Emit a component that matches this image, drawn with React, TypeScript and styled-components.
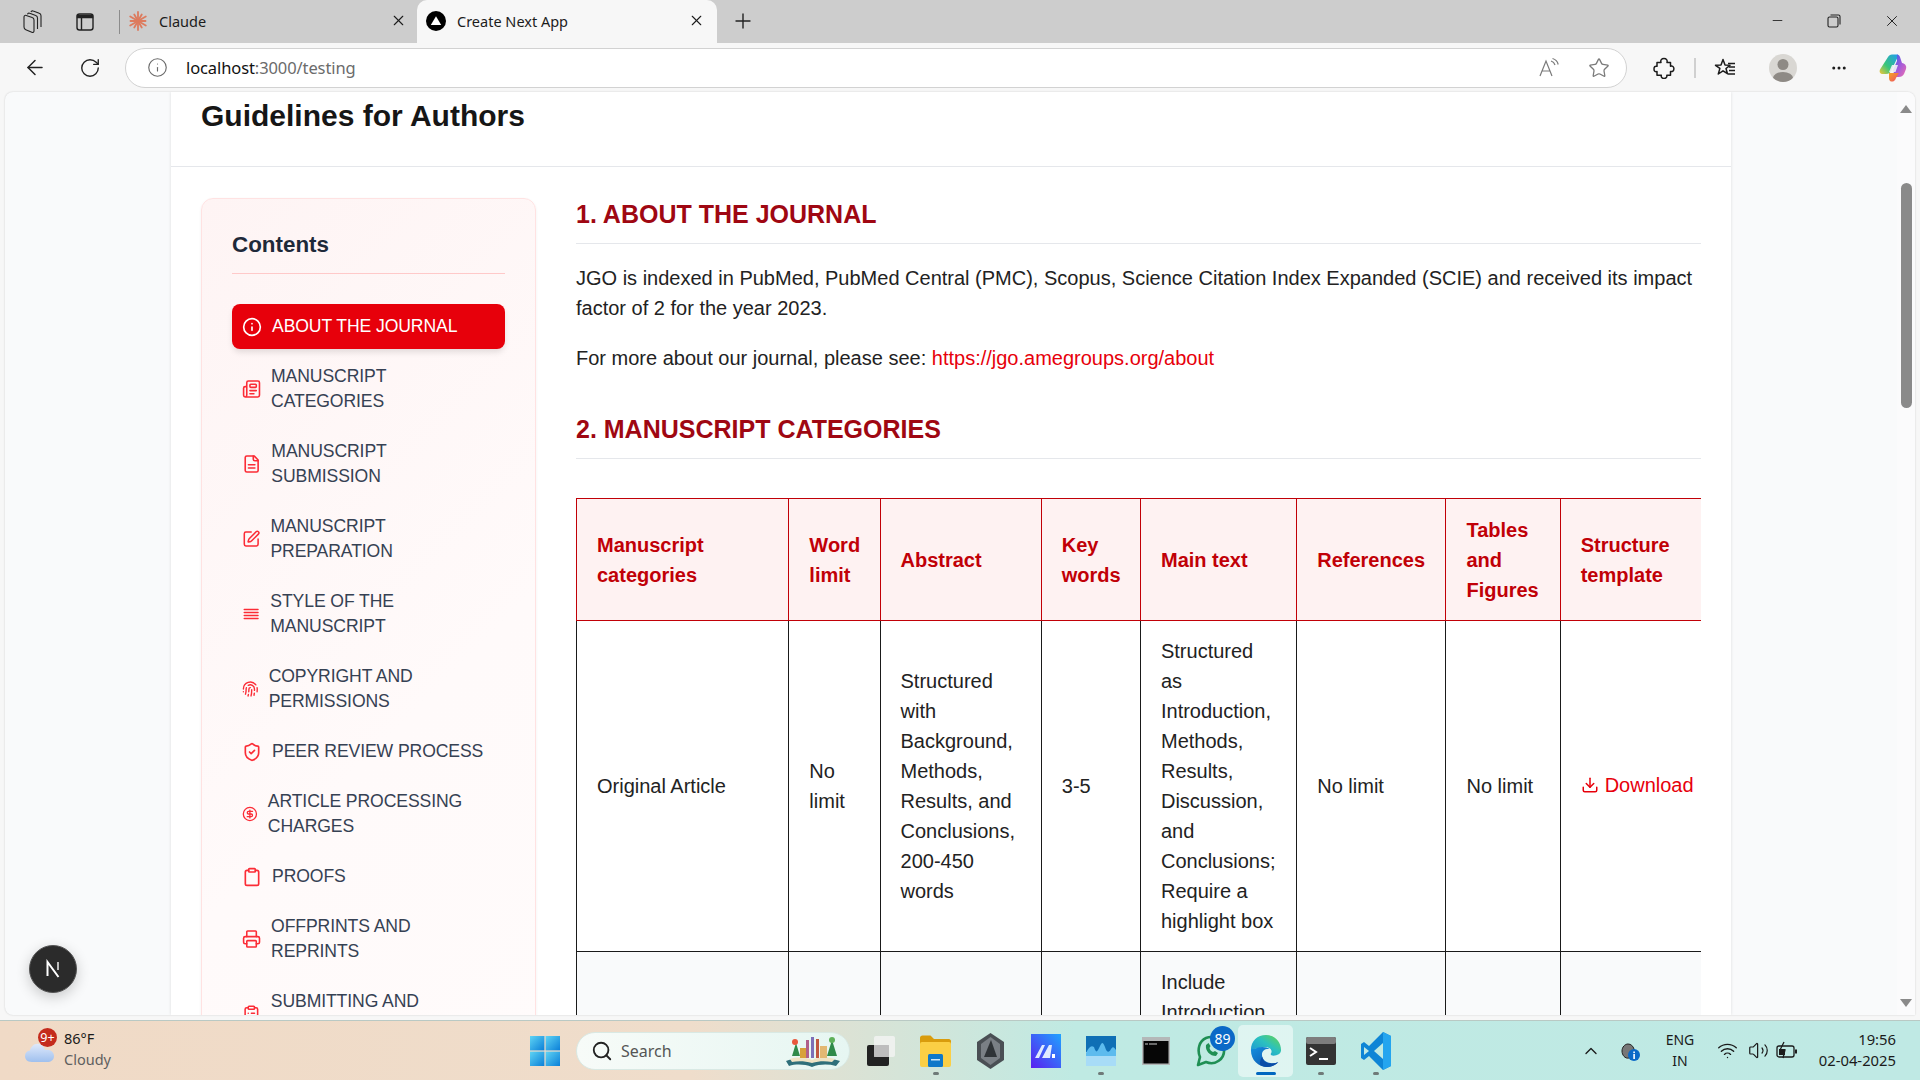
import React from "react";
import styled, { createGlobalStyle } from "styled-components";
import {
  ArrowLeft, RotateCw, Info, Star, Newspaper, SquarePen, Fingerprint, ShieldCheck,
  CircleDollarSign, Clipboard, Printer, ClipboardList, Download, Plus, X, Minus, Search,
  ChevronUp, Wifi, Volume2, MoreHorizontal,
} from "lucide-react";
import { FiAlignJustify } from "react-icons/fi";

const sans = `"Liberation Sans", Arial, sans-serif`;
const ui = `"Noto Sans", "Open Sans", sans-serif`;

const Global = createGlobalStyle`
  html, body { margin: 0; padding: 0; width: 1920px; height: 1080px; overflow: hidden; background: #f7f7f7; }
  * { box-sizing: border-box; }
`;

const Win = styled.div`
  width: 1920px; height: 1080px; display: flex; flex-direction: column; background: #f7f7f7; font-family: ${sans}; overflow: hidden;
`;

/* ---------- tab strip ---------- */
const TabStrip = styled.div`
  height: 43px; flex: none; background: #cdcdcd; display: flex; align-items: stretch; padding-left: 21px;
`;
const StripIcon = styled.div`
  width: 24px; height: 43px; display: flex; align-items: center; justify-content: center; margin-right: 28px; color: #222;
  &:nth-child(2) { margin-right: 22px; }
`;
const StripSep = styled.div`
  width: 1px; height: 24px; background: #8c8c8c; align-self: center; margin-right: 8px;
`;
const Tab = styled.div<{ $active?: boolean }>`
  width: ${(p) => (p.$active ? "300px" : "289px")}; height: 43px; flex: none; display: flex; align-items: center;
  padding: ${(p) => (p.$active ? "0 12px 2px 9px" : "0 10px 2px 0")};
  background: ${(p) => (p.$active ? "#f7f7f7" : "transparent")};
  border-radius: ${(p) => (p.$active ? "10px 10px 0 0" : "0")};
  font: 14.5px ${ui}; color: #1c1c1c; gap: 11px;
`;
const TabTitle = styled.span`
  flex: 1; white-space: nowrap;
`;
const NewTab = styled.div`
  width: 52px; display: flex; align-items: center; justify-content: center; color: #222; padding-bottom: 2px;
`;
const WinControls = styled.div`
  margin-left: auto; display: flex; align-items: center; padding: 0 19px 2px 0; gap: 42px; color: #222;
`;

/* ---------- toolbar ---------- */
const Toolbar = styled.div`
  height: 49px; flex: none; display: flex; align-items: center; padding: 0 0 0 23px; color: #222;
`;
const NavBtn = styled.div`
  width: 24px; height: 24px; flex: none; display: flex; align-items: center; justify-content: center; margin-right: 31px;
  &:nth-child(2) { margin-right: 23px; }
`;
const Address = styled.div`
  width: 1502px; height: 40px; flex: none; background: #fff; border: 1.5px solid #d2d2d2; border-radius: 20px; display: flex;
  align-items: center; padding: 0 16px 0 21px; color: #6a6a6a;
`;
const UrlHost = styled.span`color: #111;`;
const Url = styled.span`
  font: 16.5px ${ui}; color: #6b6b6b; margin-left: 18px; flex: 1; letter-spacing: -0.1px;
`;
const AddrIcons = styled.div`
  display: flex; align-items: center; gap: 28px; color: #7a7a7a;
`;
const ToolIcons = styled.div`
  display: flex; align-items: center; flex: none; margin-left: 25px; color: #1c1c1c;
`;
const ToolCell = styled.div<{ $w: number; $ml?: number }>`
  width: ${(p) => p.$w}px; margin-left: ${(p) => p.$ml ?? 0}px; display: flex; align-items: center; justify-content: center; flex: none;
`;
const ToolSep = styled.div`
  width: 2px; height: 20px; background: #d0d0d0;
`;
const Avatar = styled.div`
  width: 28px; height: 28px; border-radius: 50%; background: #d9d7d3; overflow: hidden; display: flex;
`;

/* ---------- viewport ---------- */
const Viewport = styled.div`
  flex: none; height: 923px; margin: 0 5px 0 5px; background: #f9fafb; border-radius: 8px 8px 0 8px;
  box-shadow: 0 0 2px rgba(0,0,0,0.18); display: flex; overflow: hidden; position: relative;
`;
const PageArea = styled.div`
  flex: 1; display: flex; justify-content: center; min-width: 0;
`;
const Sheet = styled.div`
  width: 1560px; flex: none; background: #fff; box-shadow: 0 0 3px rgba(0,0,0,0.12);
`;
const PageHead = styled.header`
  padding: 6px 30px 0; border-bottom: 1px solid #e5e7eb; height: 75px;
`;
const PageTitle = styled.h1`
  margin: 0; font: bold 30px/36px ${sans}; color: #161616;
`;
const Body = styled.div`
  display: flex; gap: 40px; padding: 31px 30px 0;
`;
const Sidebar = styled.aside`
  width: 335px; flex: none; align-self: flex-start; padding: 32px 30px 30px; border: 1px solid #ffe2e2; border-radius: 12px;
  background: linear-gradient(135deg, #fef4f4 0%, #fffafa 60%, #fffbfb 100%);
  box-shadow: 0 1px 3px rgba(0,0,0,0.06);
`;
const SideTitle = styled.h3`
  margin: 0; font: bold 22.4px/28px ${sans}; color: #1e2939; padding-bottom: 14px; border-bottom: 1px solid #ffc9c9; margin-bottom: 30px;
`;
const NavList = styled.nav`
  display: flex; flex-direction: column; gap: 5px;
`;
const NavItem = styled.a<{ $active?: boolean }>`
  display: flex; align-items: center; padding: 10px 12px 10px 10px; border-radius: 8px; font: 17.6px/25px ${sans};
  letter-spacing: -0.1px;
  color: ${(p) => (p.$active ? "#fff" : "#364153")};
  background: ${(p) => (p.$active ? "#e7000b" : "transparent")};
  box-shadow: ${(p) => (p.$active ? "0 4px 6px -1px rgba(0,0,0,0.12)" : "none")};
  svg { width: 20px; height: 20px; margin-right: 10px; color: ${(p) => (p.$active ? "#fff" : "#fb2c36")}; overflow: hidden; }
`;
const Main = styled.main`
  flex: 1; min-width: 0;
`;
const SectionTitle = styled.h2`
  margin: 0 0 19px; font: bold 25px/33px ${sans}; color: #9f0712; padding-bottom: 12px; border-bottom: 1px solid #e5e7eb;
`;
const Para = styled.p`
  margin: 0 0 20px; font: 20px/30px ${sans}; color: #222;
`;
const RedLink = styled.a`
  color: #e7000b;
`;
const Section = styled.section`
  margin-bottom: 40px;
`;
const TableWrap = styled.div`
  overflow: hidden; margin-top: 39px;
`;
const Table = styled.table`
  border-collapse: collapse; table-layout: fixed; width: 1145px; font: 20px/30px ${sans};
`;
const Th = styled.th`
  background: #fef2f2; color: #c10007; font-weight: bold; text-align: left; padding: 15.5px 20px; border: 1px solid #c10007; vertical-align: middle;
`;
const Td = styled.td`
  padding: 15px 20px; border: 1px solid #1a1a1a; color: #222; vertical-align: middle;
`;
const AltRow = styled.tr`
  background: #f9fafb;
`;
const DownloadLink = styled.a`
  color: #e7000b; display: inline-flex; align-items: center; gap: 6px; white-space: nowrap;
`;
const NextBadge = styled.div`
  position: absolute; left: 24px; top: 853px; width: 48px; height: 48px; border-radius: 50%; background: #2b2b2b;
  border: 1.5px solid #555; box-shadow: 0 4px 14px rgba(0,0,0,0.2); display: flex; align-items: center; justify-content: center;
`;

/* ---------- scrollbar ---------- */
const ScrollBar = styled.div`
  width: 18px; flex: none; background: #fbfbfc; display: flex; flex-direction: column; align-items: center;
`;
const ArrowUp = styled.div`
  margin-top: 13px; width: 0; height: 0; border-left: 6.5px solid transparent; border-right: 6.5px solid transparent; border-bottom: 8px solid #8a8a8a;
`;
const Thumb = styled.div`
  margin-top: 70px; width: 11px; height: 225px; border-radius: 6px; background: #8a8a8a;
`;
const ArrowDown = styled.div`
  margin-top: auto; margin-bottom: 8px; width: 0; height: 0; border-left: 6.5px solid transparent; border-right: 6.5px solid transparent; border-top: 8px solid #8a8a8a;
`;

/* ---------- taskbar ---------- */
const Taskbar = styled.div`
  margin-top: 5px; height: 60px; flex: none; border-top: 1px solid #b9c9c4;
  background: linear-gradient(90deg, #f0dac6 0%, #efddcb 36%, #bfeae3 56%, #bfe9e4 100%);
  display: flex; align-items: center;
`;
const Weather = styled.div`
  width: 530px; flex: none; display: flex; align-items: center; padding-left: 24px; position: relative;
`;
const WeatherBadge = styled.div`
  position: absolute; left: 38px; top: 0; width: 19px; height: 19px; border-radius: 50%; background: #c42b1c; color: #fff;
  font: 12.5px/19px ${ui}; text-align: center;
`;
const WeatherText = styled.div`
  margin: 0 0 4px 6px; font: 14.5px/21px ${ui}; color: #1b1b1b;
`;
const WeatherSub = styled.div`
  color: #5f5f5f;
`;
const SearchPill = styled.div`
  width: 274px; height: 38px; margin-left: 16px; border-radius: 19px; flex: none; display: flex; align-items: center; padding: 0 5px 0 14px;
  background: linear-gradient(90deg, #f7fbf8, #e6f6f2); border: 1px solid #d9e9e4; color: #222;
`;
const SearchText = styled.span`
  font: 16px ${ui}; color: #555; margin-left: 8px; flex: 1;
`;
const Apps = styled.div`
  display: flex; align-items: center; margin-left: 3px;
`;
const AppIcon = styled.div<{ $active?: boolean }>`
  width: 55px; height: 52px; flex: none; display: flex; align-items: center; justify-content: center; position: relative; border-radius: 5px;
  background: ${(p) => (p.$active ? "rgba(255,255,255,0.5)" : "transparent")};
`;
const Dot = styled.span<{ $active?: boolean }>`
  position: absolute; bottom: 2px; left: 50%; transform: translateX(-50%); height: 3px; border-radius: 2px;
  width: ${(p) => (p.$active ? "20px" : "6px")}; background: ${(p) => (p.$active ? "#0067c0" : "#6f7a78")};
`;
const CountBadge = styled.span`
  position: absolute; top: 1px; right: 3px; width: 25px; height: 25px; border-radius: 50%; background: #0b69c7; color: #fff;
  font: 14px/25px ${ui}; text-align: center;
`;
const Tray = styled.div`
  margin-left: auto; display: flex; align-items: center; color: #1b1b1b; padding-right: 24px;
`;
const TrayCell = styled.div<{ $w: number }>`
  width: ${(p) => p.$w}px; flex: none; display: flex; justify-content: center; align-items: center;
`;
const Lang = styled.div`
  font: 14px/21px ${ui}; text-align: center; width: 60px; margin-bottom: 2px;
`;
const Clock = styled.div`
  font: 14.8px/21px ${ui}; text-align: right; width: 92px; margin: 0 0 2px 2px;
`;

/* ---------- drawn icons ---------- */
const FileTwoLines = () => (
  <svg viewBox="0 0 24 24" fill="none" stroke="currentColor" strokeWidth="2" strokeLinecap="round" strokeLinejoin="round">
    <path d="M15 2H6a2 2 0 0 0-2 2v16a2 2 0 0 0 2 2h12a2 2 0 0 0 2-2V7z" />
    <path d="M14 2v4a2 2 0 0 0 2 2h4" />
    <path d="M8 13h8M8 17h8" />
  </svg>
);
const TabsIcon = () => (
  <svg width="22" height="26" viewBox="0 0 22 26" fill="none" stroke="#222" strokeWidth="1.100">
    <path d="M2 8c0-1.200 1-2 2.200-1.600l6 2.200c1.200.4 1.800 1.300 1.800 2.500V22c0 1.200-1 1.800-2.200 1.300l-6-2.600C2.600 20.200 2 19.300 2 18z" />
    <path d="M5.500 5.300c.3-1 1.200-1.400 2.200-1l6 2.200c1.200.4 1.800 1.300 1.800 2.500v11" />
    <path d="M9 3c.3-1 1.200-1.400 2.200-1l6 2.200C18.400 4.600 19 5.500 19 6.700V18" />
  </svg>
);
const VerticalTabsIcon = () => (
  <svg width="20" height="20" viewBox="0 0 20 20" fill="none" stroke="#222" strokeWidth="1.400">
    <rect x="2" y="2" width="16" height="16" rx="2.500" />
    <path d="M2.500 3.500h15v2h-15z" fill="#222" />
    <path d="M6.500 5v13" />
  </svg>
);
const ClaudeIcon = () => (
  <svg width="20" height="20" viewBox="0 0 20 20" stroke="#dd7b5e" strokeWidth="1.800" strokeLinecap="round">
    {[0, 30, 60, 90, 120, 150, 180, 210, 240, 270, 300, 330].map((a) => (
      <line key={a} x1="10" y1="10" x2="10" y2={a % 60 === 0 ? 1 : 2.5} transform={`rotate(${a} 10 10)`} />
    ))}
  </svg>
);
const NextFav = () => (
  <svg width="20" height="20" viewBox="0 0 20 20">
    <circle cx="10" cy="10" r="10" fill="#000" />
    <path d="M10 5.200 15.200 14H4.800z" fill="#fff" />
  </svg>
);
const RestoreIcon = () => (
  <svg width="14" height="14" viewBox="0 0 14 14" fill="none" stroke="#222" strokeWidth="1.100">
    <rect x="1" y="3" width="10" height="10" rx="1.500" />
    <path d="M3.500 1h8a1.500 1.500 0 0 1 1.500 1.500v8" />
  </svg>
);
const ReadAloud = () => (
  <svg width="22" height="22" viewBox="0 0 22 22" fill="none" stroke="#7a7a7a" strokeWidth="1.200">
    <path d="M2 19 8 4l6 15M4.200 14h7.600" />
    <path d="M13 4c2 .6 3.400 2 4 4M14.500 1.500c3 .8 5 3 5.700 6" />
  </svg>
);
const PuzzleIcon = () => (
  <svg width="22" height="22" viewBox="0 0 22 22" fill="none" stroke="#1c1c1c" strokeWidth="1.500" strokeLinejoin="round">
    <path d="M8 5.500c-.8-2.400.6-4 3-4s3.600 1.800 3 4h3.500v3.700c2-.6 3.400.6 3.400 2.600s-1.400 3.200-3.400 2.600v3.800h-3.700c.5 2-.8 3.300-2.800 3.300s-3.200-1.300-2.700-3.300H4v-3.600c-2 .5-3-.7-3-2.700s1-3.100 3-2.600V5.500z" />
  </svg>
);
const FavList = () => (
  <svg width="22" height="22" viewBox="0 0 22 22" fill="none" stroke="#1c1c1c" strokeWidth="1.500" strokeLinejoin="round">
    <path d="M9 2.500 11 8l5 .3-4 3.200 1.400 5L9 13.800 4.300 17l1.600-5.600L1.500 8.300l5.500-.3z" />
    <path d="M15 10h6M15 13.500h6M13.500 17H21M14 6.500h7" />
  </svg>
);
const CopilotIcon = () => (
  <svg width="28" height="28" viewBox="0 0 28 28">
    <defs>
      <linearGradient id="cp1" x1="0" y1="1" x2="1" y2="0"><stop offset="0" stopColor="#f2c63a" /><stop offset=".4" stopColor="#38c67a" /><stop offset="1" stopColor="#1f9bf0" /></linearGradient>
      <linearGradient id="cp2" x1="0" y1="0" x2="1" y2="1"><stop offset="0" stopColor="#2a62e8" /><stop offset=".5" stopColor="#a05bdc" /><stop offset="1" stopColor="#f06fae" /></linearGradient>
      <linearGradient id="cp3" x1="0" y1="0" x2="1" y2="1"><stop offset="0" stopColor="#f5a623" /><stop offset="1" stopColor="#ef4a6a" /></linearGradient>
    </defs>
    <path d="M9 3c1-1.500 2-2.500 4-2.500h5c1.500 0 1.500 1 1 2L13 15c-1 3-3 5-6 5H4c-3 0-4-2-3-4.500z" fill="url(#cp1)" />
    <path d="M18 .5c1.500 0 2.500 1 3 2.500l2 6c3 .5 5 3 4 6l-2 5c-1 2-3 3-5 3h-4l-2-7 4-9z" fill="url(#cp2)" />
    <path d="M10 19h10l-3 5c-1 3-3 4-5 3.500-1.500-.5-2-2-2-4z" fill="url(#cp3)" />
    <path d="M13 11h6l-2.500 7H10z" fill="#f3f3f6" opacity=".9" />
  </svg>
);
const NextN = () => (
  <svg width="20" height="20" viewBox="0 0 20 20" fill="none" stroke="#fff" strokeWidth="2">
    <path d="M4.500 17V3l11 15" />
    <path d="M15 3v8" stroke="#bdbdbd" />
  </svg>
);
const CloudIcon = () => (
  <svg width="34" height="26" viewBox="0 0 32 26">
    <defs><linearGradient id="cl" x1="0" y1="0" x2="0" y2="1"><stop offset="0" stopColor="#dfe9fb" /><stop offset="1" stopColor="#9fc0ee" /></linearGradient></defs>
    <path d="M7 24C2 24 0 21 0 18s2-5 5-5.400C6 8 10 5 14 6c3 .6 5 3 6 6 5-1 9 2 9 6s-3 6-7 6z" fill="url(#cl)" />
  </svg>
);
const WinLogo = () => (
  <svg width="30" height="30" viewBox="0 0 30 30">
    <defs><linearGradient id="wl" x1="0" y1="0" x2="1" y2="1"><stop offset="0" stopColor="#5fd4f4" /><stop offset="1" stopColor="#0a7fd8" /></linearGradient></defs>
    <rect x="0" y="0" width="14.400" height="14.400" fill="url(#wl)" />
    <rect x="15.600" y="0" width="14.400" height="14.400" fill="url(#wl)" />
    <rect x="0" y="15.600" width="14.400" height="14.400" fill="url(#wl)" />
    <rect x="15.600" y="15.600" width="14.400" height="14.400" fill="url(#wl)" />
  </svg>
);
const BookArt = () => (
  <svg width="62" height="34" viewBox="0 0 62 34">
    <path d="M4 27c8-3 18-3 26 1 8-4 18-4 28-1l-4 5c-8-2-16-2-24 1-8-3-16-3-23-1z" fill="#2f6f7a" />
    <path d="M8 25c7-2 15-2 22 1 7-3 15-3 23-1l-3 3c-7-1-13-1-20 1-7-2-14-2-20-1z" fill="#efe3c4" />
    <path d="M10 22 14 9l4 13z" fill="#2f8a4a" /><path d="M45 22l5-16 5 16z" fill="#2f8a4a" />
    <rect x="24" y="6" width="3" height="18" fill="#b05f8a" /><rect x="29" y="3" width="3" height="21" fill="#7d6fb8" /><rect x="34" y="5" width="3" height="19" fill="#c0563f" />
    <rect x="18" y="14" width="6" height="10" fill="#d8a03a" /><rect x="38" y="12" width="7" height="12" fill="#e3b873" />
    <circle cx="13" cy="8" r="3" fill="#e8573d" /><circle cx="50" cy="6" r="3" fill="#5eb05a" />
  </svg>
);
const SnapIcon = () => (
  <svg width="30" height="32" viewBox="0 0 30 32">
    <rect x="1" y="10" width="22" height="21" rx="2" fill="#222" />
    <rect x="8" y="1" width="21" height="21" rx="2" fill="#f4f4f4" opacity=".8" />
    <rect x="8" y="10" width="15" height="12" fill="#bbb" opacity=".9" />
  </svg>
);
const FolderIcon = () => (
  <svg width="31" height="32" viewBox="0 0 31 32">
    <path d="M0 3c0-1.500 1-2.500 2.500-2.500h8L14 4h15c1 0 2 1 2 2v3H0z" fill="#d99c0d" />
    <rect x="0" y="7" width="31" height="25" rx="2" fill="#fbcf45" />
    <rect x="8" y="19" width="15" height="13" rx="1.500" fill="#0f78c9" />
    <rect x="11" y="24" width="9" height="1.500" fill="#cbe6fa" />
  </svg>
);
const HexIcon = () => (
  <svg width="27" height="36" viewBox="0 0 27 36">
    <path d="M13.500 0 27 9v18l-13.500 9L0 27V9z" fill="#4a4f54" />
    <path d="M13.500 4 23 11v14l-9.500 7L4 25V11z" fill="#7a7f85" />
    <path d="M14 7 7 24h13z" fill="#2f3337" />
  </svg>
);
const SlashIcon = () => (
  <svg width="30" height="34" viewBox="0 0 30 34">
    <defs><linearGradient id="sl" x1="1" y1="0" x2="0" y2="1"><stop offset="0" stopColor="#1fa3ff" /><stop offset="1" stopColor="#5a1ff0" /></linearGradient></defs>
    <rect width="30" height="34" fill="url(#sl)" />
    <path d="M4 24 11 11h3L8 24zM11 24l7-13h3l-2 13z" fill="#dfeaff" />
    <rect x="21" y="20" width="3" height="4" fill="#fff" />
  </svg>
);
const ChartIcon = () => (
  <svg width="30" height="30" viewBox="0 0 30 30">
    <rect width="30" height="30" fill="#a8dcf7" />
    <rect width="30" height="16" fill="#0f6fb5" />
    <path d="M0 17c3-6 5-8 8-6 2 6 3 6 6-1 2-4 3-4 5 1 2 6 4 6 6 2 2-3 3-2 5 1v6H0z" fill="#5dbbee" />
  </svg>
);
const CmdIcon = () => (
  <svg width="28" height="28" viewBox="0 0 28 28">
    <rect width="28" height="28" fill="#b4b8b8" />
    <rect x="1.500" y="4" width="25" height="22.500" fill="#060606" />
    <path d="M3 7h3M7 7h8" stroke="#ccc" strokeWidth="1" />
  </svg>
);
const WhatsApp = () => (
  <svg width="30" height="32" viewBox="0 0 30 32" fill="none">
    <path d="M2 30l2-8C1 15 3 6 10 3c8-3 17 2 18 11 1 10-9 17-18 13z" stroke="#1f8f54" strokeWidth="2.600" strokeLinejoin="round" />
    <path d="M10 10c-1 6 4 11 10 11l2-3-3-2-2 1c-2-1-3-2-3.500-4l1-2-2-3z" fill="#1f8f54" />
  </svg>
);
const EdgeIcon = () => (
  <svg width="32" height="36" viewBox="0 0 34 36">
    <defs>
      <linearGradient id="e1" x1="0" y1="1" x2="1" y2="0"><stop offset="0" stopColor="#1b8fd8" /><stop offset=".55" stopColor="#2bc0c0" /><stop offset="1" stopColor="#66d64a" /></linearGradient>
      <linearGradient id="e2" x1="0" y1="0" x2="1" y2="1"><stop offset="0" stopColor="#1590df" /><stop offset="1" stopColor="#0a4da8" /></linearGradient>
    </defs>
    <path d="M1 17C1 7 8 1 17 1c9 0 16 7 16 16 0 4-4 6-8 6-2 0-3-.5-3-2 2-2 1-7-5-7-7 0-16 3-16 3z" fill="url(#e1)" />
    <path d="M1 17c0 11 8 18 17 18 5 0 9-2 12-5-6 2-15 1-17-6-1.500-6 3-9 8-8-4-3-12-3-16 0-2 0-4 0-4 1z" fill="url(#e2)" />
    <path d="M13 24c1 7 9 9 17 6-3 3-7 5-12 5-3 0-5-1-7-2-1-3 0-6 2-9z" fill="#0a4da8" />
  </svg>
);
const TerminalIcon = () => (
  <svg width="30" height="28" viewBox="0 0 30 28">
    <rect width="30" height="28" rx="2" fill="#333" />
    <rect width="30" height="7" rx="2" fill="#7d7d7d" />
    <path d="M4 11l6 4-6 4" stroke="#fff" strokeWidth="2" fill="none" />
    <path d="M13 22h9" stroke="#fff" strokeWidth="2" />
  </svg>
);
const VsCode = () => (
  <svg width="30" height="38" viewBox="0 0 30 38">
    <path d="M22 0 30 4v30l-8 4L8 24l-5 4-3-2v-14l3-2 5 4z" fill="#0e85d6" />
    <path d="M22 0 30 4v30l-8 4z" fill="#24a5ef" />
    <path d="M22 11 13 19l9 8z" fill="#bfeae4" />
    <path d="M3 15 8 19l-5 4z" fill="#bfeae4" />
  </svg>
);
const CloudInfo = () => (
  <svg width="24" height="24" viewBox="0 0 24 24">
    <path d="M4 12c0-4 3-7 6-7 3 0 5 2 6 5 1 4-1 9-5 9-4 1-7-3-7-7z" fill="#777" stroke="#222" strokeWidth="1" />
    <circle cx="16" cy="16" r="6" fill="#0b69c7" />
    <rect x="15.300" y="15" width="1.600" height="5" fill="#fff" /><rect x="15.300" y="12.500" width="1.600" height="1.600" fill="#fff" />
  </svg>
);
const BatteryIcon = () => (
  <svg width="24" height="20" viewBox="0 0 24 20" fill="none" stroke="#1b1b1b" strokeWidth="1.300">
    <rect x="2" y="5" width="17" height="11" rx="2" />
    <path d="M21 8.500v4" strokeWidth="2" />
    <path d="M9 1 5 9h5l-2 8" strokeWidth="1.300" />
    <rect x="4" y="8" width="6" height="6" fill="#1b1b1b" stroke="none" />
  </svg>
);

const navItems = [
  { label: "ABOUT THE JOURNAL", icon: <Info />, active: true },
  { label: "MANUSCRIPT CATEGORIES", icon: <Newspaper /> },
  { label: "MANUSCRIPT SUBMISSION", icon: <FileTwoLines /> },
  { label: "MANUSCRIPT PREPARATION", icon: <SquarePen /> },
  { label: "STYLE OF THE MANUSCRIPT", icon: <FiAlignJustify /> },
  { label: "COPYRIGHT AND PERMISSIONS", icon: <Fingerprint /> },
  { label: "PEER REVIEW PROCESS", icon: <ShieldCheck /> },
  { label: "ARTICLE PROCESSING CHARGES", icon: <CircleDollarSign /> },
  { label: "PROOFS", icon: <Clipboard /> },
  { label: "OFFPRINTS AND REPRINTS", icon: <Printer /> },
  { label: "SUBMITTING AND SUPPORT", icon: <ClipboardList /> },
];

const colWidths = [212, 91, 161, 99, 156, 149, 114, 160];
const headers = ["Manuscript categories", "Word limit", "Abstract", "Key words", "Main text", "References", "Tables and Figures", "Structure template"];

const apps = [
  { el: <SnapIcon /> },
  { el: <FolderIcon />, dot: true },
  { el: <HexIcon /> },
  { el: <SlashIcon /> },
  { el: <ChartIcon />, dot: true },
  { el: <CmdIcon /> },
  { el: <WhatsApp />, count: "89" },
  { el: <EdgeIcon />, active: true },
  { el: <TerminalIcon />, dot: true },
  { el: <VsCode />, dot: true },
];

export default function App() {
  return (
    <Win>
      <Global />
      <TabStrip>
        <StripIcon><TabsIcon /></StripIcon>
        <StripIcon><VerticalTabsIcon /></StripIcon>
        <StripSep />
        <Tab><ClaudeIcon /><TabTitle>Claude</TabTitle><X size={17} strokeWidth={1.5} /></Tab>
        <Tab $active><NextFav /><TabTitle>Create Next App</TabTitle><X size={17} strokeWidth={1.5} /></Tab>
        <NewTab><Plus size={24} strokeWidth={1.4} /></NewTab>
        <WinControls>
          <Minus size={15} strokeWidth={1.4} />
          <RestoreIcon />
          <X size={18} strokeWidth={1.3} />
        </WinControls>
      </TabStrip>
      <Toolbar>
        <NavBtn><ArrowLeft size={25} strokeWidth={1.5} /></NavBtn>
        <NavBtn><RotateCw size={22} strokeWidth={1.5} /></NavBtn>
        <Address>
          <Info size={21} strokeWidth={1.3} />
          <Url><UrlHost>localhost</UrlHost>:3000/testing</Url>
          <AddrIcons>
            <ReadAloud />
            <Star size={22} strokeWidth={1.4} />
          </AddrIcons>
        </Address>
        <ToolIcons>
          <ToolCell $w={24}><PuzzleIcon /></ToolCell>
          <ToolCell $w={38}><ToolSep /></ToolCell>
          <ToolCell $w={22}><FavList /></ToolCell>
          <ToolCell $w={94}>
            <Avatar>
              <svg width="28" height="28" viewBox="0 0 28 28"><circle cx="14" cy="10.500" r="5.500" fill="#8e8a85" /><ellipse cx="14" cy="24" rx="10" ry="6" fill="#8e8a85" /></svg>
            </Avatar>
          </ToolCell>
          <ToolCell $w={18}><MoreHorizontal size={22} strokeWidth={2} /></ToolCell>
          <ToolCell $w={28} $ml={31}><CopilotIcon /></ToolCell>
        </ToolIcons>
      </Toolbar>
      <Viewport>
        <PageArea>
          <Sheet>
            <PageHead><PageTitle>Guidelines for Authors</PageTitle></PageHead>
            <Body>
              <Sidebar>
                <SideTitle>Contents</SideTitle>
                <NavList>
                  {navItems.map((n) => (
                    <NavItem key={n.label} $active={n.active}>{n.icon}<span>{n.label}</span></NavItem>
                  ))}
                </NavList>
              </Sidebar>
              <Main>
                <Section>
                  <SectionTitle>1. ABOUT THE JOURNAL</SectionTitle>
                  <Para>JGO is indexed in PubMed, PubMed Central (PMC), Scopus, Science Citation Index Expanded (SCIE) and received its impact factor of 2 for the year 2023.</Para>
                  <Para>For more about our journal, please see: <RedLink>https://jgo.amegroups.org/about</RedLink></Para>
                </Section>
                <section>
                  <SectionTitle>2. MANUSCRIPT CATEGORIES</SectionTitle>
                  <TableWrap>
                    <Table>
                      <colgroup>{colWidths.map((w, i) => <col key={i} width={w} />)}</colgroup>
                      <thead>
                        <tr>{headers.map((h) => <Th key={h}>{h}</Th>)}</tr>
                      </thead>
                      <tbody>
                        <tr>
                          <Td>Original Article</Td>
                          <Td>No limit</Td>
                          <Td>Structured with Background, Methods, Results, and Conclusions, 200-450 words</Td>
                          <Td>3-5</Td>
                          <Td>Structured as Introduction, Methods, Results, Discussion, and Conclusions; Require a highlight box</Td>
                          <Td>No limit</Td>
                          <Td>No limit</Td>
                          <Td><DownloadLink><Download size={18} />Download</DownloadLink></Td>
                        </tr>
                        <AltRow>
                          <Td /><Td /><Td /><Td />
                          <Td>Include Introduction</Td>
                          <Td /><Td /><Td />
                        </AltRow>
                      </tbody>
                    </Table>
                  </TableWrap>
                </section>
              </Main>
            </Body>
          </Sheet>
        </PageArea>
        <ScrollBar>
          <ArrowUp />
          <Thumb />
          <ArrowDown />
        </ScrollBar>
        <NextBadge><NextN /></NextBadge>
      </Viewport>
      <Taskbar>
        <Weather>
          <CloudIcon />
          <WeatherBadge>9+</WeatherBadge>
          <WeatherText>86°F<WeatherSub>Cloudy</WeatherSub></WeatherText>
        </Weather>
        <WinLogo />
        <SearchPill>
          <Search size={22} strokeWidth={2} />
          <SearchText>Search</SearchText>
          <BookArt />
        </SearchPill>
        <Apps>
          {apps.map((a, i) => (
            <AppIcon key={i} $active={a.active}>
              {a.el}
              {a.count && <CountBadge>{a.count}</CountBadge>}
              {(a.dot || a.active) && <Dot $active={a.active} />}
            </AppIcon>
          ))}
        </Apps>
        <Tray>
          <TrayCell $w={38}><ChevronUp size={20} strokeWidth={1.6} /></TrayCell>
          <TrayCell $w={40}><CloudInfo /></TrayCell>
          <Lang>ENG<br />IN</Lang>
          <TrayCell $w={34}><Wifi size={21} strokeWidth={1.6} /></TrayCell>
          <TrayCell $w={28}><Volume2 size={21} strokeWidth={1.4} /></TrayCell>
          <TrayCell $w={30}><BatteryIcon /></TrayCell>
          <Clock>19:56<br />02-04-2025</Clock>
        </Tray>
      </Taskbar>
    </Win>
  );
}
